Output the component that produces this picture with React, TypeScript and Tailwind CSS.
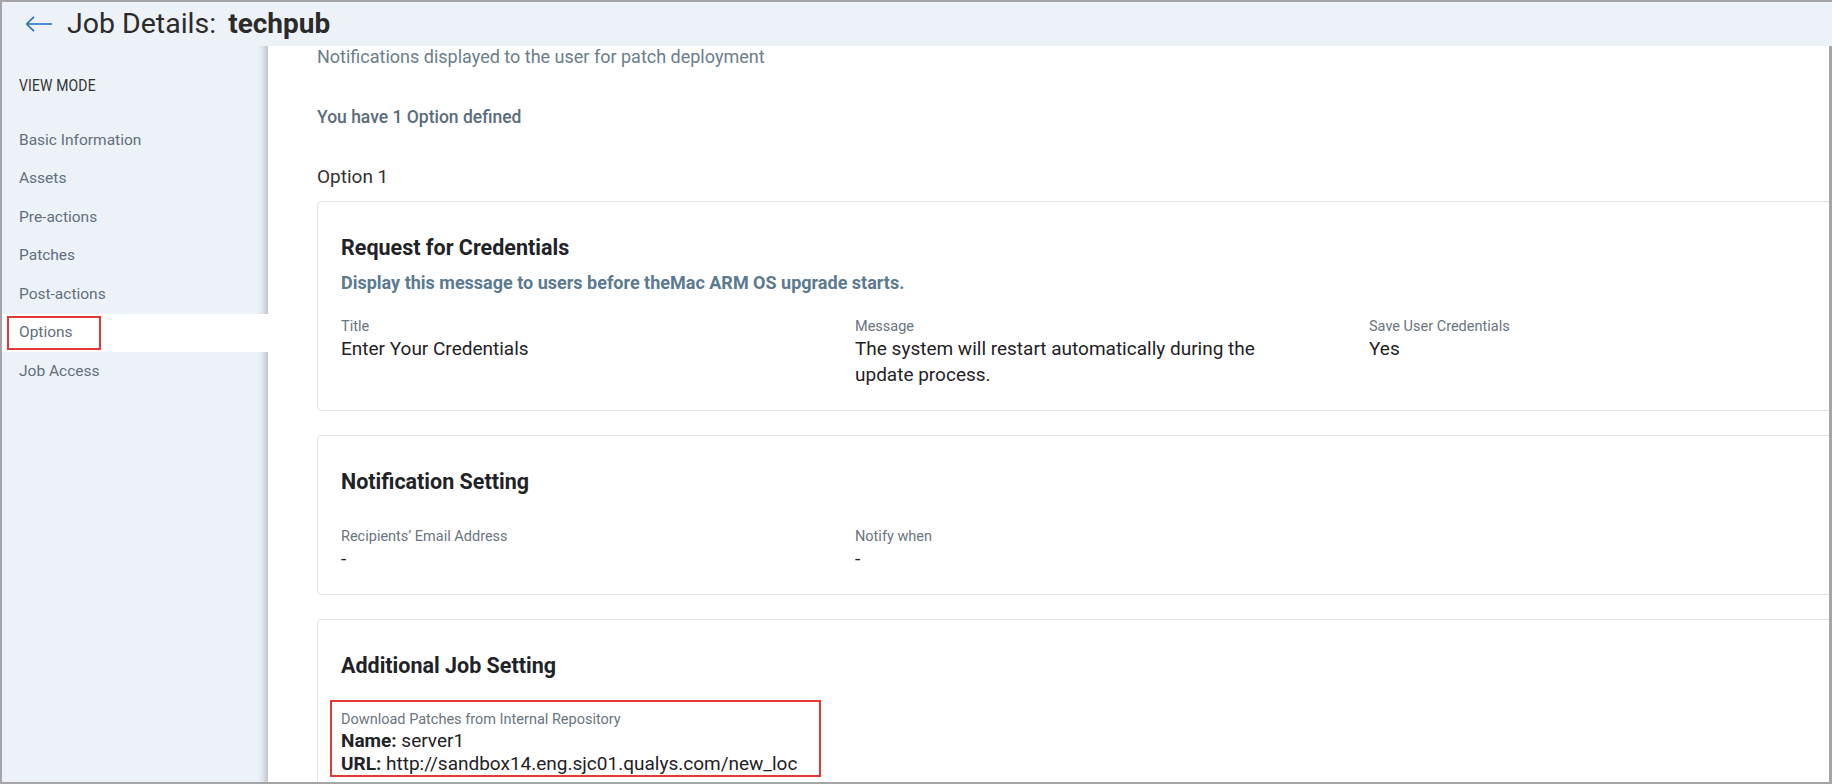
const navItems = [
  'Basic Information',
  'Assets',
  'Pre-actions',
  'Patches',
  'Post-actions',
  'Options',
  'Job Access',
];

function Field({ label, value, wide }: { label: string; value: string; wide?: boolean }) {
  return (
    <div className={wide ? 'max-w-[420px]' : ''}>
      <div className="text-[14.5px] leading-[18px] text-[#6b7580]">{label}</div>
      <div className="text-[19px] leading-[26px] text-[#1f2226]">{value}</div>
    </div>
  );
}

function Card({ children }: { children: React.ReactNode }) {
  return (
    <div className="w-[1560px] shrink-0 rounded-[4px] border border-[#dfe2e6] bg-white px-[23px] pt-[32px] pb-[22px]">
      {children}
    </div>
  );
}

export default function App() {
  return (
    <div
      className="flex h-[784px] w-[1832px] flex-col overflow-hidden border-t-2 border-b-2 border-l-2 border-[#a5a5a5] bg-white"
      style={{ fontFamily: 'Roboto, "Noto Sans", sans-serif' }}
    >
      {/* header */}
      <div className="flex h-[44px] shrink-0 items-center bg-[#edf2f9]">
        <svg width="28" height="18" viewBox="0 0 28 18" fill="none" className="ml-[23px] text-[#1b6ec2]">
          <path d="M1.5 9H27M1.5 9L9 1.8M1.5 9L9 16.2" stroke="currentColor" strokeWidth="1.6" />
        </svg>
        <span className="ml-[14px] text-[28.5px] leading-none text-[#2b2b2b]">Job Details:</span>
        <span className="ml-[12px] text-[28px] font-bold leading-none text-[#2b2b2b]">techpub</span>
      </div>

      <div className="flex min-h-0 flex-1">
        {/* sidebar */}
        <div className="w-[266px] shrink-0 bg-[#edf2f9] shadow-[inset_-9px_0_8px_-7px_rgba(0,0,0,0.28)]">
          <div className="pl-[17px] pt-[28px]">
            <span className="inline-block origin-left scale-x-[0.82] text-[17px] leading-[22px] tracking-[0.2px] text-[#333]">
              VIEW MODE
            </span>
          </div>
          <div className="mt-[23px] flex flex-col">
            {navItems.map((item) => (
              <div
                key={item}
                className={`flex h-[38.5px] items-center pl-[17px] text-[15.5px] text-[#5f6f7d] ${
                  item === 'Options' ? 'bg-white' : ''
                }`}
              >
                {item === 'Options' ? (
                  <span className="-ml-[12px] flex h-[34px] w-[94px] items-center border-2 border-[#e53935] pl-[10px]">
                    {item}
                  </span>
                ) : (
                  item
                )}
              </div>
            ))}
          </div>
        </div>

        {/* main */}
        <div className="min-w-0 flex-1 overflow-hidden border-r-[3px] border-[#a5a5a5] pl-[49px]">
          <div className="text-[18px] leading-[22px] text-[#6b7e8c]">
            Notifications displayed to the user for patch deployment
          </div>
          <div className="mt-[38px] text-[17.5px] font-medium leading-[22px] text-[#5a6d7b]">
            You have 1 Option defined
          </div>
          <div className="mt-[37px] text-[19px] leading-[24px] text-[#333]">Option 1</div>

          <div className="mt-[12px] flex flex-col gap-[24px]">
            <Card>
              <div className="text-[21.5px] font-bold leading-[28px] text-[#1f2328]">Request for Credentials</div>
              <div className="mt-[10px] text-[18px] font-bold leading-[22px] text-[#5b7a8f]">
                Display this message to users before theMac ARM OS upgrade starts.
              </div>
              <div className="mt-[24px] grid grid-cols-[514px_514px_514px]">
                <Field label="Title" value="Enter Your Credentials" />
                <Field
                  label="Message"
                  value="The system will restart automatically during the update process."
                  wide
                />
                <Field label="Save User Credentials" value="Yes" />
              </div>
            </Card>

            <Card>
              <div className="text-[21.5px] font-bold leading-[28px] text-[#1f2328]">Notification Setting</div>
              <div className="mt-[32px] grid grid-cols-[514px_514px_514px]">
                <Field label="Recipients’ Email Address" value="-" />
                <Field label="Notify when" value="-" />
              </div>
            </Card>

            <Card>
              <div className="text-[21.5px] font-bold leading-[28px] text-[#1f2328]">Additional Job Setting</div>
              <div className="-ml-[11px] mt-[20px] w-[491px] border-2 border-[#e53935] px-[9px] pt-[9px] pb-0">
                <div className="text-[14.5px] leading-[18px] text-[#6b7580]">
                  Download Patches from Internal Repository
                </div>
                <div className="text-[19px] leading-[23px] text-[#1f2226]">
                  <span className="font-bold">Name:</span> server1
                </div>
                <div className="text-[19px] leading-[23px] text-[#1f2226]">
                  <span className="font-bold">URL:</span> http://sandbox14.eng.sjc01.qualys.com/new_loc
                </div>
              </div>
            </Card>
          </div>
        </div>
      </div>
    </div>
  );
}
